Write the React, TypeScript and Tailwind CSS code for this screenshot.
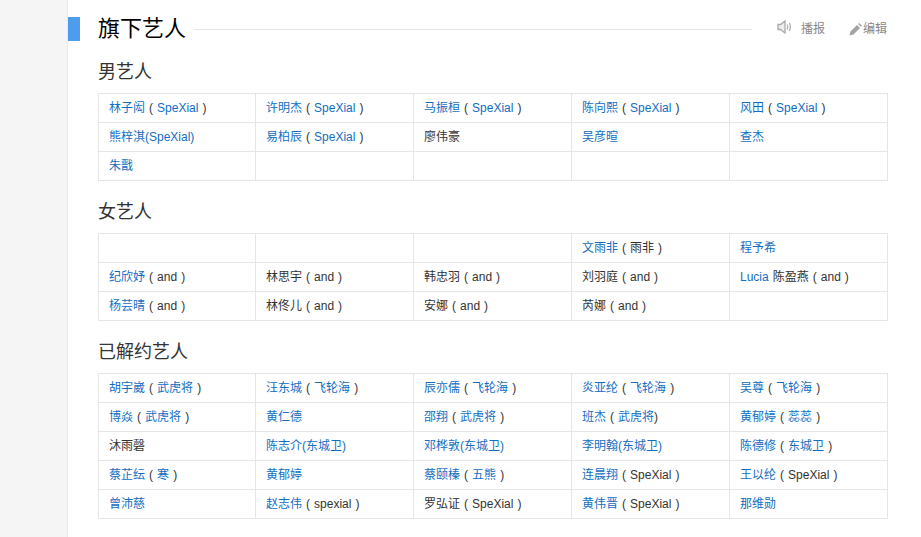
import React from "react";

const B = ({ children }: { children: React.ReactNode }) => <a className="text-[#136ec2]">{children}</a>;

type Cell = React.ReactNode;

const male: Cell[][] = [
  [
    <><B>林子闳</B> ( <B>SpeXial</B> )</>,
    <><B>许明杰</B> ( <B>SpeXial</B> )</>,
    <><B>马振桓</B> ( <B>SpeXial</B> )</>,
    <><B>陈向熙</B> ( <B>SpeXial</B> )</>,
    <><B>风田</B> ( <B>SpeXial</B> )</>,
  ],
  [
    <B>熊梓淇(SpeXial)</B>,
    <><B>易柏辰</B> ( <B>SpeXial</B> )</>,
    <>廖伟豪</>,
    <B>吴彦暄</B>,
    <B>查杰</B>,
  ],
  [<B>朱戬</B>, null, null, null, null],
];

const female: Cell[][] = [
  [null, null, null, <><B>文雨非</B> ( 雨非 )</>, <B>程予希</B>],
  [
    <><B>纪欣妤</B> ( and )</>,
    <>林思宇 ( and )</>,
    <>韩忠羽 ( and )</>,
    <>刘羽庭 ( and )</>,
    <><B>Lucia</B> 陈盈燕 ( and )</>,
  ],
  [<><B>杨芸晴</B> ( and )</>, <>林佟儿 ( and )</>, <>安娜 ( and )</>, <>芮娜 ( and )</>, null],
];

const former: Cell[][] = [
  [
    <><B>胡宇崴</B> ( <B>武虎将</B> )</>,
    <><B>汪东城</B> ( <B>飞轮海</B> )</>,
    <><B>辰亦儒</B> ( <B>飞轮海</B> )</>,
    <><B>炎亚纶</B> ( <B>飞轮海</B> )</>,
    <><B>吴尊</B> ( <B>飞轮海</B> )</>,
  ],
  [
    <><B>博焱</B> ( <B>武虎将</B> )</>,
    <B>黄仁德</B>,
    <><B>邵翔</B> ( <B>武虎将</B> )</>,
    <><B>班杰</B> ( <B>武虎将</B>)</>,
    <><B>黄郁婷</B> ( <B>蕊蕊</B> )</>,
  ],
  [
    <>沐雨磬</>,
    <B>陈志介(东城卫)</B>,
    <B>邓桦敦(东城卫)</B>,
    <B>李明翰(东城卫)</B>,
    <><B>陈德修</B> ( <B>东城卫</B> )</>,
  ],
  [
    <><B>蔡芷纭</B> ( <B>寒</B> )</>,
    <B>黄郁婷</B>,
    <><B>蔡颐榛</B> ( <B>五熊</B> )</>,
    <><B>连晨翔</B> ( SpeXial )</>,
    <><B>王以纶</B> ( SpeXial )</>,
  ],
  [
    <B>曾沛慈</B>,
    <><B>赵志伟</B> ( spexial )</>,
    <>罗弘证 ( SpeXial )</>,
    <><B>黄伟晋</B> ( SpeXial )</>,
    <B>那维勋</B>,
  ],
];

function Table({ rows }: { rows: Cell[][] }) {
  return (
    <table className="w-[789px] table-fixed border-collapse text-[12px] leading-[18px] text-[#333] [word-spacing:0.7px]">
      <colgroup>
        <col className="w-[157px]" />
        <col className="w-[158px]" />
        <col className="w-[158px]" />
        <col className="w-[158px]" />
        <col className="w-[158px]" />
      </colgroup>
      <tbody>
        {rows.map((r, i) => (
          <tr key={i} className="h-[29px]">
            {r.map((c, j) => (
              <td key={j} className="border border-[#e6e6e6] px-[10px] py-0 align-middle whitespace-nowrap">
                {c}
              </td>
            ))}
          </tr>
        ))}
      </tbody>
    </table>
  );
}

function Sub({ children }: { children: React.ReactNode }) {
  return <h3 className="mt-[19px] mb-[9px] text-[18px] leading-[24px] font-normal text-[#333]">{children}</h3>;
}

export default function App() {
  return (
    <div
      className="flex h-[537px] w-[921px] overflow-hidden bg-white"
      style={{ fontFamily: '"Liberation Sans", "Noto Sans CJK SC", Arial, sans-serif' }}
    >
      <div className="h-full w-[68px] shrink-0 border-r border-[#ebebeb] bg-[#f5f5f5]" />
      <div className="flex min-w-0 flex-1 flex-col pt-[17px]">
        <div className="flex h-[24px] items-center">
          <div className="h-[24px] w-[12px] shrink-0 bg-[#4f9cee]" />
          <h2 className="ml-[18px] text-[22px] leading-[24px] font-normal text-black">旗下艺人</h2>
          <div className="ml-[8px] h-px w-[558px] bg-[#e6e6e6]" />
          <div className="ml-[25px] flex items-center text-[12px] text-[#888]">
            <svg width="15" height="14" viewBox="0 0 15 14" fill="none" className="-mt-[4px]">
              <path d="M1 4.5h2.5L8 1v12L3.500 9.500H1z" stroke="#aaa" strokeWidth="1.300" fill="#eee" />
              <path d="M10 4.500c.8 1.400.8 3.600 0 5M12.300 3c1.300 2.400 1.300 5.600 0 8" stroke="#aaa" strokeWidth="1.200" />
            </svg>
            <span className="ml-[9px]">播报</span>
            <svg width="13" height="13" viewBox="0 0 13 13" className="ml-[24px]">
              <path d="M0.500 12.500 L1.500 8.500 L8 2 L11 5 L4.500 11.500z" fill="#a3a3a3" />
              <path d="M9 1 L10.200 0 L13 2.800 L12 4z" fill="#a3a3a3" />
            </svg>
            <span className="ml-[1px]">编辑</span>
          </div>
        </div>
        <div className="ml-[30px] flex flex-col">
          <Sub>男艺人</Sub>
          <Table rows={male} />
          <Sub>女艺人</Sub>
          <Table rows={female} />
          <Sub>已解约艺人</Sub>
          <Table rows={former} />
        </div>
      </div>
    </div>
  );
}
